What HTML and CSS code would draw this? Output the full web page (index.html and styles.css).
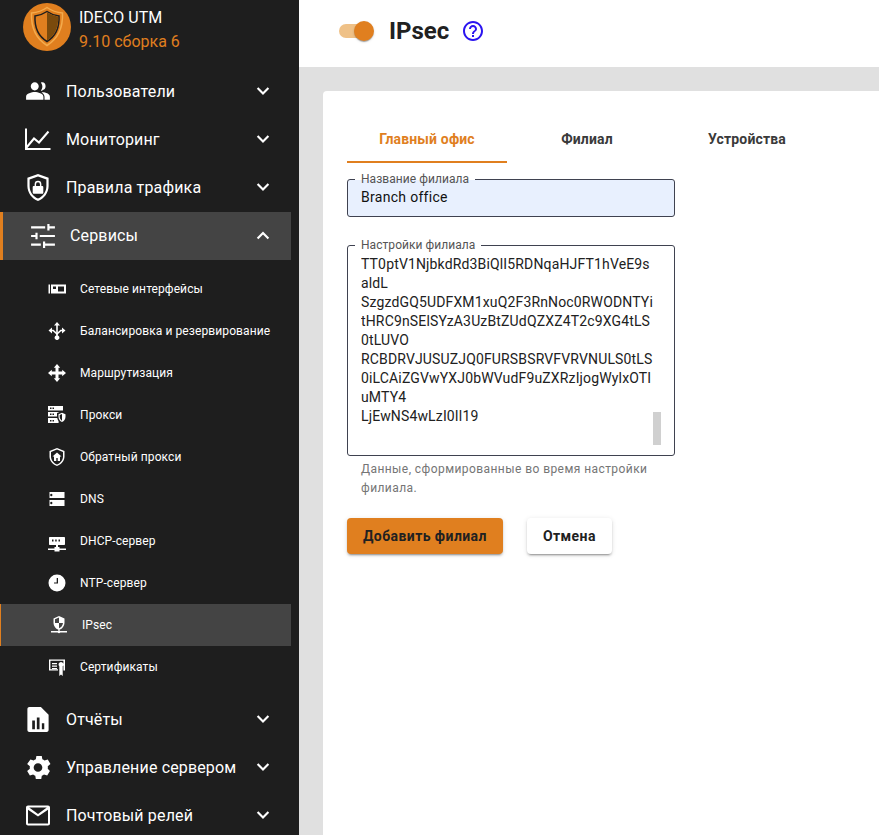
FILE: index.html
```html
<!DOCTYPE html>
<html lang="ru">
<head>
  <meta charset="UTF-8">
  <title>IDECO UTM - IPsec</title>
  <link rel="stylesheet" href="styles.css">
</head>
<body>
  <aside class="sidebar">
    <div class="brand">
      <svg class="logo" viewBox="0 0 48 48">
        <circle cx="24" cy="24" r="24" fill="#e07f1f"/>
        <path d="M24 4.500C29 8 34 9.500 39.500 10C40 23 36 35 24 42.500C12 35 8 23 8.500 10C14 9.500 19 8 24 4.500Z" fill="none" stroke="#f4ab4c" stroke-width="1.500"/>
        <path d="M24 8.500C28.500 11.500 32 12.500 36 13C36.500 23 33 33 24 38.500C15 33 11.500 23 12 13C16 12.500 19.500 11.500 24 8.500Z" fill="#e07f1f" stroke="#1e1e1e" stroke-width="1.500"/>
        <path d="M24 9.500C28.500 12 32 13 35.200 13.700C35.500 23 32.500 32.500 24 37.500Z" fill="#7a4a0c"/>
      </svg>
      <div class="brand-text">
        <div class="brand-name">IDECO UTM</div>
        <div class="brand-version">9.10 сборка 6</div>
      </div>
    </div>

    <nav>
      <div class="nav-item">
        <svg class="nav-icon" viewBox="0 0 24 24"><path d="M16 11c1.700 0 3-1.600 3-3.500S17.700 4 16 4c-.5 0-1 .1-1.400.4.900 1 1.400 2.200 1.400 3.600s-.5 2.500-1.400 3.600c.4.200.9.400 1.400.4zM9 11.500c2 0 3.700-1.700 3.700-3.800S11 4 9 4 5.300 5.600 5.300 7.700 7 11.500 9 11.500zM9 13c-2.800 0-8 1.400-8 4.200V20h16v-2.800C17 14.400 11.800 13 9 13zm7.500.2c-.4 0-.8 0-1.200.1 1.400 1 2.700 2.300 2.700 3.900V20h5v-2.800c0-2.600-4.200-4-6.500-4z"/></svg>
        <span class="nav-label">Пользователи</span>
        <svg class="chevron" viewBox="0 0 24 24"><path d="M5.500 8.500 12 15l6.500-6.500"/></svg>
      </div>
      <div class="nav-item">
        <svg class="nav-icon nav-icon-big" viewBox="0 0 26 24"><path class="line-icon" d="M1 1v20.500h24.500M1.500 20l7.500-9 5 4 9.500-11"/></svg>
        <span class="nav-label">Мониторинг</span>
        <svg class="chevron" viewBox="0 0 24 24"><path d="M5.500 8.500 12 15l6.500-6.500"/></svg>
      </div>
      <div class="nav-item">
        <svg class="nav-icon nav-icon-big" viewBox="0 0 24 28"><path fill-rule="evenodd" d="M12 0 1 4v8.500C1 19.500 5.700 25.700 12 28c6.300-2.300 11-8.500 11-15.500V4zm0 2.500 8.700 3.100v7c0 5.600-3.600 10.700-8.700 12.800-5.100-2.100-8.700-7.200-8.700-12.800v-7z"/><path fill-rule="evenodd" d="M16.500 12.500h-1v-2a3.500 3.500 0 0 0-7 0v2h-1c-.6 0-1 .4-1 1v6c0 .6.400 1 1 1h9c.6 0 1-.4 1-1v-6c0-.6-.4-1-1-1zm-2.500 0h-4v-2a2 2 0 0 1 4 0z"/></svg>
        <span class="nav-label">Правила трафика</span>
        <svg class="chevron" viewBox="0 0 24 24"><path d="M5.500 8.500 12 15l6.500-6.500"/></svg>
      </div>
      <div class="nav-item nav-item-open">
        <svg class="nav-icon" viewBox="0 0 24 24"><path d="M1 3h13v2H1zM16 1h2v2h5v2h-5v2h-2zM1 11h4V9h2v6H5v-2H1zM9 11h14v2H9zM1 19h9v2H1zM12 17h2v2h9v2h-9v2h-2z"/></svg>
        <span class="nav-label">Сервисы</span>
        <svg class="chevron" viewBox="0 0 24 24"><path d="M5.500 15 12 8.500 18.500 15"/></svg>
      </div>

      <div class="submenu">
        <div class="sub-item">
          <svg class="sub-icon" viewBox="0 0 18 18"><path fill-rule="evenodd" d="M.5 4.500H2v9H.5zM3 4.500h15v9H3zm2 2v2.500h3V6.500zm5 0v5h6v-5z"/></svg>
          <span>Сетевые интерфейсы</span>
        </div>
        <div class="sub-item">
          <svg class="sub-icon" viewBox="0 0 18 18"><path d="M9 0l3 3.500H9.800V13.400a2.400 2.400 0 1 1-1.600 0V3.500H6zM.5 8.500 4 5.500v6zM17.500 8.500 14 11.500v-6z"/><path class="sub-line" d="M4 8.500h1.200L9 12l3.800-3.500H14"/></svg>
          <span>Балансировка и резервирование</span>
        </div>
        <div class="sub-item">
          <svg class="sub-icon" viewBox="0 0 18 18"><path d="M9 0l3.200 3.800h-1.700v3.700h3.700V5.800L18 9l-3.800 3.200v-1.700h-3.700v3.700h1.700L9 18l-3.200-3.800h1.700v-3.700H3.800v1.700L0 9l3.800-3.200v1.700h3.700V3.800H5.800z"/></svg>
          <span>Маршрутизация</span>
        </div>
        <div class="sub-item">
          <svg class="sub-icon" viewBox="0 0 18 18"><path fill-rule="evenodd" d="M0 0h15v4.500H0zm2 1.500V3h1.500V1.500zm2.500 0V3H6V1.500zM0 6h11.500L9 7v3.500H0zm2 1.500V9h1.500V7.500zm2.500 0V9H6V7.500zM0 12h9.200c.3 1.200.8 2.200 1.400 3.200V17H0zm2 2v1.500h1.500V14zm2.500 0v1.500H6V14z"/><path fill-rule="evenodd" d="M14 6.800 10.500 8.200v2.600c0 2.300 1.500 4.400 3.500 5.200 2-.8 3.500-2.900 3.500-5.200V8.200zm0 1.300v6.600c-1.300-.7-2.300-2.300-2.300-3.900V9z"/></svg>
          <span>Прокси</span>
        </div>
        <div class="sub-item">
          <svg class="sub-icon" viewBox="0 0 18 18"><path fill-rule="evenodd" d="M9 0 1.500 3v5.500c0 4.200 3.200 8 7.500 9.500 4.300-1.500 7.500-5.300 7.500-9.500V3zm0 1.600 6 2.400v4.500c0 3.500-2.500 6.700-6 8-3.500-1.300-6-4.500-6-8V4z"/><path d="M9 4.500 4.500 8.500H6V13h2.300v-3h1.400v3H12V8.500h1.500z"/></svg>
          <span>Обратный прокси</span>
        </div>
        <div class="sub-item">
          <svg class="sub-icon" viewBox="0 0 18 18"><path fill-rule="evenodd" d="M1.500 1.500h15v6h-15zm3 3a1.200 1.200 0 1 0 0 .01zM1.500 9.500h15v6h-15zm3 3a1.200 1.200 0 1 0 0 .01z" transform="translate(0 .5)"/></svg>
          <span>DNS</span>
        </div>
        <div class="sub-item">
          <svg class="sub-icon sub-icon-low" viewBox="0 0 18 18"><path fill-rule="evenodd" d="M2 2h14c.6 0 1 .4 1 1v6c0 .6-.4 1-1 1H10v2h1.500v1.500H18V15h-6.500v1.500h-5V15H0v-1.500h6.500V12H8v-2H2c-.6 0-1-.4-1-1V3c0-.6.4-1 1-1zm2 2.500v2h1.500v-2zm3.200 0v2h1.500v-2zm3.300 0v2H12v-2z"/></svg>
          <span>DHCP-сервер</span>
        </div>
        <div class="sub-item">
          <svg class="sub-icon" viewBox="0 0 18 18"><path fill-rule="evenodd" d="M9 .5a8.500 8.500 0 1 0 0 17 8.500 8.500 0 0 0 0-17zM8.700 4h1.300v5.600H6v-1.200h2.700z"/></svg>
          <span>NTP-сервер</span>
        </div>
        <div class="sub-item sub-item-active">
          <svg class="sub-icon" viewBox="0 0 18 18"><path fill-rule="evenodd" d="M9 0 3.500 2.400v4C3.500 9.800 5.800 12.800 8.300 13.600V15H1v1.500h6.700a1.500 1.500 0 0 0 2.600 0H17V15H9.700v-1.400c2.500-.8 4.800-3.800 4.800-7.200v-4zm0 1.500v5.400h4c-.3 2.500-2 4.800-4 5.300V6.900H5V3.300z"/></svg>
          <span>IPsec</span>
        </div>
        <div class="sub-item">
          <svg class="sub-icon" viewBox="0 0 18 18"><path fill-rule="evenodd" d="M1 1.500h16v11h-1.600v-9.800H2.400v8.600H10v1.200H1zM4 5h5v1.300H4zm0 2.500h5v1.300H4zm0 2.500h5v1H4zM13 4a2.500 2.500 0 0 1 1.700 4.300V18L13 16.500 11.300 18V8.300A2.500 2.500 0 0 1 13 4z"/></svg>
          <span>Сертификаты</span>
        </div>
      </div>

      <div class="nav-item">
        <svg class="nav-icon nav-icon-big" viewBox="0 0 24 28"><path fill-rule="evenodd" d="M3 1h12l8 8v16c0 1.200-1 2-2 2H3c-1 0-2-.8-2-2V3c0-1.200 1-2 2-2zm3 14v9h2.800v-9zm4.800-3v12h2.800V12zM16 18v6h2.500v-6z"/></svg>
        <span class="nav-label">Отчёты</span>
        <svg class="chevron" viewBox="0 0 24 24"><path d="M5.500 8.500 12 15l6.500-6.500"/></svg>
      </div>
      <div class="nav-item">
        <svg class="nav-icon nav-icon-big" viewBox="0 0 24 24"><path fill-rule="evenodd" d="M21.500 13.200c0-.4.100-.8.100-1.200s0-.8-.1-1.200l2.500-2-2.500-4.200-3 1c-.6-.5-1.300-.9-2-1.200L16 1.300h-5l-.5 3.100c-.7.300-1.400.7-2 1.200l-3-1L2.500 8.800l2.500 2c0 .4-.1.800-.1 1.200s0 .8.100 1.200l-2.500 2 2.500 4.200 3-1c.6.500 1.300.9 2 1.200l.5 3.100h5l.5-3.100c.7-.3 1.400-.7 2-1.200l3 1 2.500-4.200zM12.500 16a4 4 0 1 1 0-8 4 4 0 0 1 0 8z" transform="translate(-.5 0)"/></svg>
        <span class="nav-label">Управление сервером</span>
        <svg class="chevron" viewBox="0 0 24 24"><path d="M5.500 8.500 12 15l6.500-6.500"/></svg>
      </div>
      <div class="nav-item">
        <svg class="nav-icon nav-icon-big" viewBox="0 0 26 22"><path fill-rule="evenodd" d="M3 1h20c1.100 0 2 .9 2 2v16c0 1.100-.9 2-2 2H3c-1.100 0-2-.9-2-2V3c0-1.100.9-2 2-2zm0 4.200V19h20V5.200L13 12zM4.200 3 13 9.500 21.800 3z"/></svg>
        <span class="nav-label">Почтовый релей</span>
        <svg class="chevron" viewBox="0 0 24 24"><path d="M5.500 8.500 12 15l6.500-6.500"/></svg>
      </div>
    </nav>
  </aside>

  <main class="content">
    <header class="topbar">
      <span class="switch"><span class="switch-thumb"></span></span>
      <h1 class="page-title">IPsec</h1>
      <svg class="help" viewBox="0 0 24 24"><path d="M11 18h2v-2h-2v2zm1-16C6.480 2 2 6.480 2 12s4.480 10 10 10 10-4.480 10-10S17.520 2 12 2zm0 18c-4.410 0-8-3.590-8-8s3.590-8 8-8 8 3.590 8 8-3.590 8-8 8zm0-14c-2.210 0-4 1.790-4 4h2c0-1.100.9-2 2-2s2 .9 2 2c0 2-3 1.750-3 5h2c0-2.250 3-2.500 3-5 0-2.210-1.790-4-4-4z"/></svg>
    </header>

    <div class="workspace">
      <section class="card">
        <div class="tabs">
          <div class="tab tab-active">Главный офис</div>
          <div class="tab">Филиал</div>
          <div class="tab">Устройства</div>
        </div>

        <div class="field field-name">
          <label class="field-label">Название филиала</label>
          <div class="field-value">Branch office</div>
        </div>

        <div class="field field-area">
          <label class="field-label">Настройки филиала</label>
          <div class="area-text">TT0ptV1NjbkdRd3BiQlI5RDNqaHJFT1hVeE9s<br>aldL<br>SzgzdGQ5UDFXM1xuQ2F3RnNoc0RWODNTYi<br>tHRC9nSElSYzA3UzBtZUdQZXZ4T2c9XG4tLS<br>0tLUVO<br>RCBDRVJUSUZJQ0FURSBSRVFVRVNULS0tLS<br>0iLCAiZGVwYXJ0bWVudF9uZXRzIjogWylxOTI<br>uMTY4<br>LjEwNS4wLzI0Il19</div>
          <span class="area-scroll"></span>
        </div>
        <p class="field-hint">Данные, сформированные во время настройки филиала.</p>

        <div class="actions">
          <button class="btn btn-primary">Добавить филиал</button>
          <button class="btn">Отмена</button>
        </div>
      </section>
    </div>
  </main>
</body>
</html>
```

FILE: styles.css
```css
* { box-sizing: border-box; }
html, body { height: 100%; }
body { margin: 0; display: flex; height: 835px; overflow: hidden; font-family: Roboto, "Noto Sans", sans-serif; color: #212121; background: #fff; }

.sidebar { width: 299px; flex: none; height: 835px; overflow: hidden; background: #1e1e1e; color: #fff; }
.brand { height: 67px; display: flex; align-items: flex-start; padding: 3px 0 0 23px; gap: 8px; }
.logo { width: 48px; height: 48px; flex: none; }
.brand-text { padding-top: 3px; font-size: 16px; line-height: 24px; }
.brand-version { color: #e07f1f; }

.nav-item { width: 291px; height: 48px; display: flex; align-items: center; padding-left: 25px; font-size: 16px; letter-spacing: .15px; }
.nav-icon { width: 26px; height: 26px; flex: none; fill: #fff; }
.nav-icon-big { height: 27px; }
.line-icon { fill: none; stroke: #fff; stroke-width: 2; }
.nav-label { margin-left: 15px; flex: 1; }
.chevron { width: 20px; height: 20px; flex: none; margin-right: 18px; fill: none; stroke: #fff; stroke-width: 2.600; }
.nav-item-open { margin-top: 1px; background: #444; border-left: 3px solid #e07f1f; padding-left: 27px; }
.nav-item-open .nav-label { margin: 0 0 2px 14px; }

.submenu { padding: 8px 0 7px; }
.sub-item { width: 291px; height: 42px; display: flex; align-items: center; padding-left: 48px; gap: 14px; font-size: 12px; letter-spacing: .1px; }
.sub-icon { width: 18px; height: 18px; flex: none; fill: #fff; }
.sub-icon-low { margin-top: 5px; }
.sub-line { fill: none; stroke: #fff; stroke-width: 1.600; }
.sub-item-active { background: #444; border-left: 1px solid #e07f1f; padding-left: 49px; }

.content { flex: 1; min-width: 0; display: flex; flex-direction: column; }
.topbar { height: 67px; flex: none; display: flex; align-items: center; padding: 0 0 5px 40px; background: #fff; }
.switch { position: relative; width: 34px; height: 14px; border-radius: 7px; background: #efc187; }
.switch-thumb { position: absolute; top: -3px; right: -1px; width: 20px; height: 20px; border-radius: 50%; background: #e07f1f; box-shadow: 0 2px 1px -1px rgba(0,0,0,.2), 0 1px 1px rgba(0,0,0,.14), 0 1px 3px rgba(0,0,0,.12); }
.page-title { margin: 0 0 0 16px; font-size: 24px; line-height: 32px; font-weight: 700; letter-spacing: 0; }
.help { width: 24px; height: 24px; margin-left: 12px; fill: #2a14f0; }

.workspace { flex: 1; background: #e0e0e0; padding: 24px 0 0 24px; }
.card { height: 100%; background: #fff; border-radius: 4px 0 0 0; padding: 24px 0 0 24px; }

.tabs { display: flex; }
.tab { width: 160px; height: 48px; border-bottom: 2px solid transparent; padding-top: 16px; font-size: 14px; line-height: 16px; font-weight: 700; letter-spacing: .15px; color: #3a3a3a; text-align: center; }
.tab-active { color: #e07f1f; border-bottom-color: #e07f1f; }

.field { position: relative; width: 328px; border: 1px solid #3f4250; border-radius: 3px; }
.field-label { position: absolute; top: -8px; left: 7px; padding: 0 6px; font-size: 12px; line-height: 14px; letter-spacing: .05px; color: #555; background: #fff; }
.field-name { margin-top: 16px; height: 38px; padding: 8px 13px 0; background: #e8f0fe; font-size: 14px; line-height: 18px; letter-spacing: .3px; color: #111; }
.field-name .field-label { background: linear-gradient(#fff 8px, #e8f0fe 8px); }
.field-area { margin-top: 28px; height: 211px; padding: 9px 0 0 13px; }
.area-text { font-size: 14px; line-height: 19px; letter-spacing: .15px; color: #212121; white-space: nowrap; overflow: hidden; }
.area-scroll { position: absolute; right: 13px; top: 166px; width: 8px; height: 33px; background: #d0d0d0; }
.field-hint { width: 328px; margin: 4px 0 0; padding: 0 14px; font-size: 12px; line-height: 19px; letter-spacing: .43px; color: #757575; }

.actions { display: flex; gap: 24px; margin-top: 20px; }
.btn { height: 36px; padding: 0 16px; border: 0; border-radius: 4px; background: #fff; font: 700 14px/36px Roboto, sans-serif; letter-spacing: .42px; color: #212121; box-shadow: 0 3px 1px -2px rgba(0,0,0,.2), 0 2px 2px rgba(0,0,0,.14), 0 1px 5px rgba(0,0,0,.12); }
.btn-primary { background: #e07f1f; }
```
